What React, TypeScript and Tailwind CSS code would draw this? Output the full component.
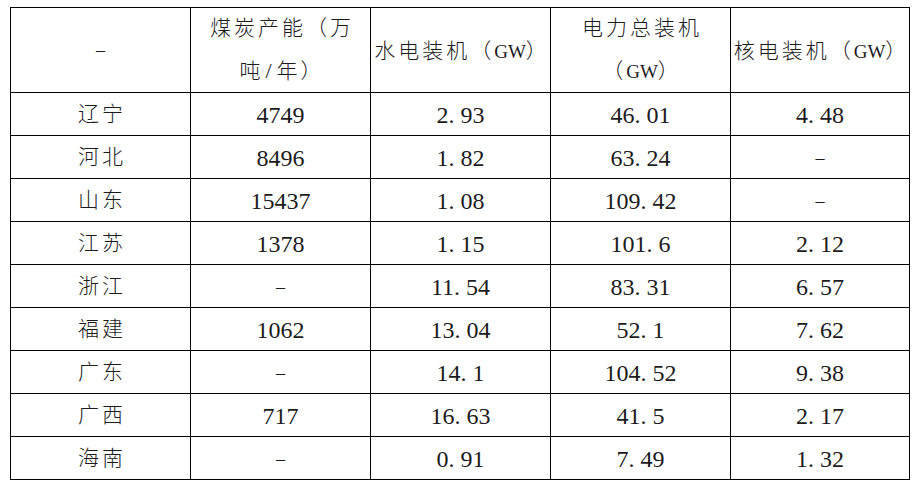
import React from "react";

const rows: string[][] = [
  ["辽宁", "4749", "2.93", "46.01", "4.48"],
  ["河北", "8496", "1.82", "63.24", "-"],
  ["山东", "15437", "1.08", "109.42", "-"],
  ["江苏", "1378", "1.15", "101.6", "2.12"],
  ["浙江", "-", "11.54", "83.31", "6.57"],
  ["福建", "1062", "13.04", "52.1", "7.62"],
  ["广东", "-", "14.1", "104.52", "9.38"],
  ["广西", "717", "16.63", "41.5", "2.17"],
  ["海南", "-", "0.91", "7.49", "1.32"],
];

function Num({ v }: { v: string }) {
  if (v === "-") {
    return <span className="font-[family-name:'Liberation_Serif',serif] text-[18px]">–</span>;
  }
  const parts = v.split(".");
  return (
    <span className="font-[family-name:'Liberation_Serif',serif] text-[24px]">
      {parts[0]}
      {parts.length > 1 && (
        <>
          <span className="mr-[6px]">.</span>
          {parts[1]}
        </>
      )}
    </span>
  );
}

function Cjk({ children }: { children: React.ReactNode }) {
  return (
    <span className="font-[family-name:'Liberation_Serif','Noto_Sans_CJK_SC',serif] font-light text-[21px] tracking-[3px] pl-[3px] whitespace-nowrap">
      {children}
    </span>
  );
}

function Latin({ children }: { children: React.ReactNode }) {
  return (
    <span className="font-[family-name:'Liberation_Serif',serif] font-normal text-[19px] tracking-[0px]">
      {children}
    </span>
  );
}

export default function App() {
  const cell = "bg-white flex items-center justify-center text-center text-[#1c1c1c] whitespace-nowrap";
  return (
    <div className="w-[917px] h-[487px] bg-white pt-[7px] pl-[10px]">
      <div className="w-[900px] grid grid-cols-[179px_179px_179px_179px_178px] grid-rows-[84px_repeat(9,42px)] gap-px bg-black border border-black">
        <div className={cell}>
          <Num v="-" />
        </div>
        <div className={`${cell} leading-[42px]`}>
          <div>
            <Cjk>煤炭产能（万</Cjk>
            <br />
            <Cjk>
              吨<span className="font-[family-name:'Liberation_Serif',serif] text-[22px] px-[2px]">/</span>年）
            </Cjk>
          </div>
        </div>
        <div className={`${cell} pt-[3px]`}>
          <Cjk>
            水电装机（<Latin>GW</Latin>）
          </Cjk>
        </div>
        <div className={`${cell} leading-[42px]`}>
          <div>
            <Cjk>电力总装机</Cjk>
            <br />
            <Cjk>
              （<Latin>GW</Latin>）
            </Cjk>
          </div>
        </div>
        <div className={`${cell} pt-[3px]`}>
          <Cjk>
            核电装机（<Latin>GW</Latin>）
          </Cjk>
        </div>
        {rows.map((r) => (
          <React.Fragment key={r[0]}>
            <div className={`${cell} pt-[2px]`}>
              <Cjk>{r[0]}</Cjk>
            </div>
            {r.slice(1).map((v, i) => (
              <div key={i} className={`${cell} pt-[2px]`}>
                <Num v={v} />
              </div>
            ))}
          </React.Fragment>
        ))}
      </div>
    </div>
  );
}
